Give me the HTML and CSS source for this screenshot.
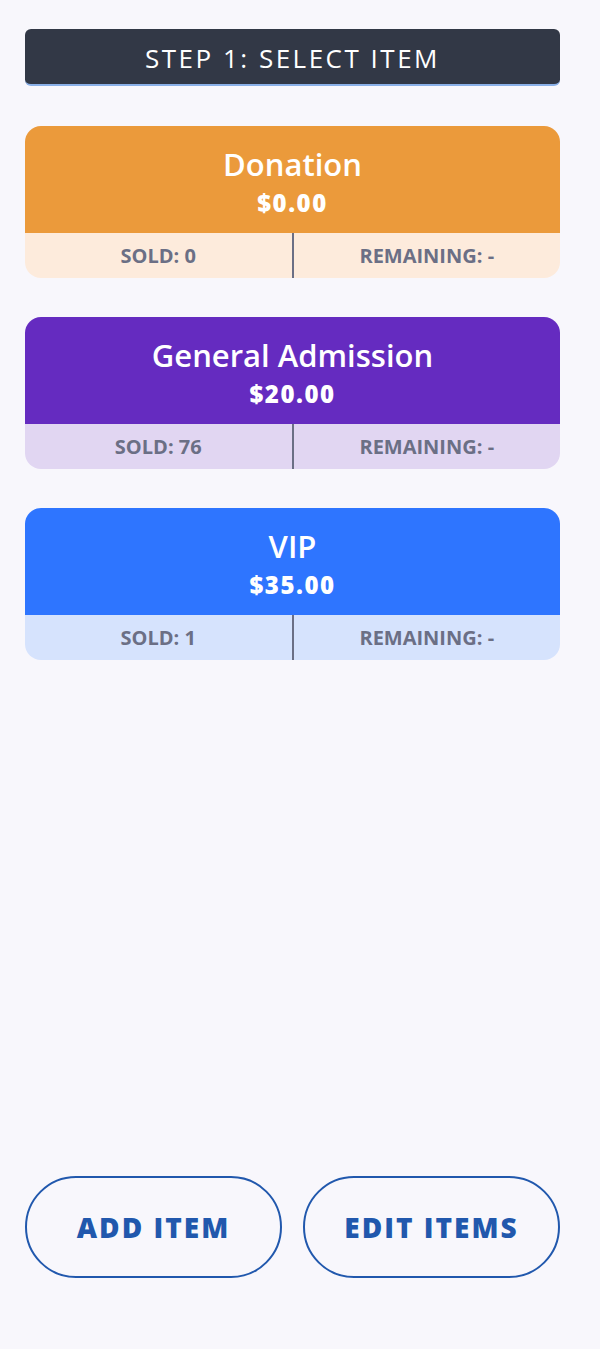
FILE: index.html
```html
<!DOCTYPE html>
<html lang="en">
<head>
    <meta charset="UTF-8">
    <meta name="viewport" content="width=device-width, initial-scale=1.0">
    <title>Select Item</title>
    <link rel="stylesheet" href="styles.css">
</head>
<body>
    <div class="page">
        <div class="step-title">STEP 1: SELECT ITEM</div>

        <div class="item-list">
            <div class="item item-orange">
                <div class="item-head">
                    <div class="item-name">Donation</div>
                    <div class="item-price">$0.00</div>
                </div>
                <div class="item-stats">
                    <div class="stat">SOLD: 0</div>
                    <div class="stat">REMAINING: -</div>
                </div>
            </div>

            <div class="item item-purple">
                <div class="item-head">
                    <div class="item-name">General Admission</div>
                    <div class="item-price">$20.00</div>
                </div>
                <div class="item-stats">
                    <div class="stat">SOLD: 76</div>
                    <div class="stat">REMAINING: -</div>
                </div>
            </div>

            <div class="item item-blue">
                <div class="item-head">
                    <div class="item-name">VIP</div>
                    <div class="item-price">$35.00</div>
                </div>
                <div class="item-stats">
                    <div class="stat">SOLD: 1</div>
                    <div class="stat">REMAINING: -</div>
                </div>
            </div>
        </div>

        <div class="actions">
            <button class="btn-outline">ADD ITEM</button>
            <button class="btn-outline">EDIT ITEMS</button>
        </div>
    </div>
</body>
</html>
```

FILE: styles.css
```css
body {
    margin: 0;
    background-color: #f8f7fc;
    font-family: "Open Sans", Arial, sans-serif;
}
.page {
    width: 535px;
    height: 1349px;
    box-sizing: border-box;
    margin-left: 25px;
    padding-top: 29px;
    display: flex;
    flex-direction: column;
}
.step-title {
    background-color: #323846;
    color: #fff;
    height: 57px;
    border-radius: 6px;
    border-bottom: 2px solid #8ab0e8;
    box-sizing: border-box;
    display: flex;
    align-items: center;
    justify-content: center;
    font-size: 26px;
    letter-spacing: 2.5px;
    padding-top: 2px;
}
.item-list {
    margin-top: 40px;
    display: flex;
    flex-direction: column;
    gap: 39px;
}
.item {
    border-radius: 16px;
    overflow: hidden;
}
.item-head {
    height: 107px;
    box-sizing: border-box;
    color: #fff;
    text-align: center;
    padding-top: 19px;
}
.item-name {
    font-size: 31px;
    font-weight: 600;
    line-height: 38px;
}
.item-price {
    font-size: 24px;
    font-weight: 800;
    line-height: 30px;
    letter-spacing: 1.5px;
    margin-top: 5px;
}
.item-stats {
    display: flex;
    height: 45px;
}
.stat {
    flex: 1;
    display: flex;
    align-items: center;
    justify-content: center;
    font-size: 20px;
    font-weight: 700;
    color: #6b6f85;
}
.stat + .stat {
    border-left: 2px solid #6b6f85;
}
.item-orange .item-head { background-color: #eb9a3b; }
.item-orange .item-stats { background-color: #fdebdc; }
.item-purple .item-head { background-color: #652bc0; }
.item-purple .item-stats { background-color: #e1d6f2; }
.item-blue .item-head { background-color: #2e75ff; }
.item-blue .item-stats { background-color: #d6e3fd; }
.actions {
    margin-top: auto;
    margin-bottom: 71px;
    display: flex;
    gap: 21px;
}
.btn-outline {
    flex: 1;
    height: 102px;
    border: 2px solid #2158ad;
    border-radius: 51px;
    background: transparent;
    color: #2158ad;
    font-family: "Open Sans", Arial, sans-serif;
    font-size: 28px;
    font-weight: 800;
    letter-spacing: 2px;
    cursor: pointer;
}
```
